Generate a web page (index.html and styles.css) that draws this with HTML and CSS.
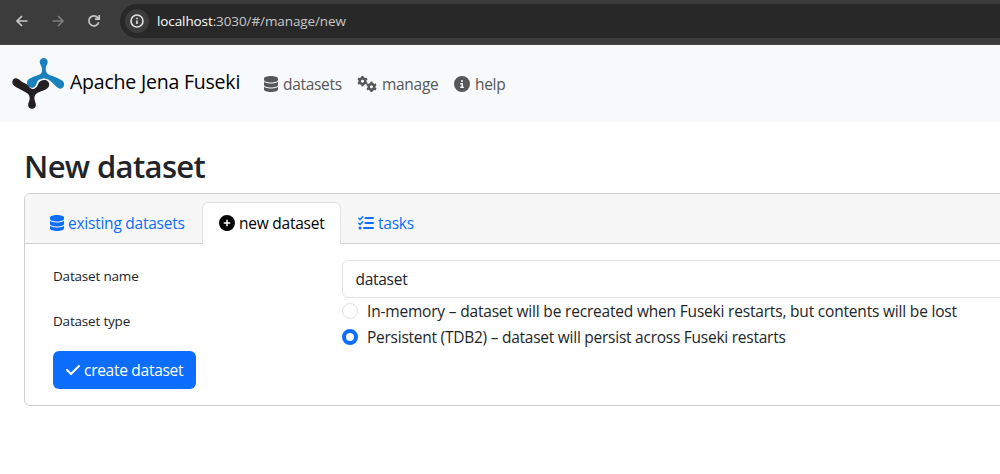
FILE: index.html
```html
<!DOCTYPE html>
<html lang="en">
<head>
<meta charset="utf-8">
<title>Apache Jena Fuseki</title>
<link rel="stylesheet" href="styles.css">
</head>
<body>
<svg class="defs" aria-hidden="true">
  <symbol id="database" viewBox="0 0 448 512"><path d="M448 80v48c0 44.2-100.3 80-224 80S0 172.2 0 128V80C0 35.8 100.3 0 224 0S448 35.8 448 80zM393.2 214.7c20.8-7.4 39.9-16.9 54.8-28.6V288c0 44.2-100.3 80-224 80S0 332.2 0 288V186.1c14.9 11.8 34 21.2 54.8 28.6C99.7 230.7 159.5 240 224 240s124.3-9.3 169.2-25.3zM0 346.1c14.9 11.8 34 21.2 54.8 28.6C99.7 390.7 159.5 400 224 400s124.3-9.3 169.2-25.3c20.8-7.4 39.9-16.9 54.8-28.6V432c0 44.2-100.3 80-224 80S0 476.2 0 432V346.1z"/></symbol>
  <symbol id="gear" viewBox="-6 -6 12 12"><circle r="3.1" fill="none" stroke="currentColor" stroke-width="2.8"/><g stroke="currentColor" stroke-width="2.5"><path d="M0-3.6V-5.7M0 3.6V5.7"/><path d="M0-3.6V-5.7M0 3.6V5.7" transform="rotate(60)"/><path d="M0-3.6V-5.7M0 3.6V5.7" transform="rotate(120)"/></g></symbol>
</svg>

<header class="browser">
  <svg class="tool" viewBox="0 0 16 16"><path d="M13.5 8H3M8 3L3 8l5 5"/></svg>
  <svg class="tool dim" viewBox="0 0 16 16"><path d="M2.5 8H13M8 3l5 5-5 5"/></svg>
  <svg class="tool" viewBox="0 0 16 16"><path d="M12.7 9.2A5 5 0 1 1 11.8 4.7L13 6M13.2 2v4.2H9"/></svg>
  <div class="address">
    <span class="site"><svg viewBox="0 0 14 14"><circle cx="7" cy="7" r="6"/><path d="M7 6.4V10M7 3.8v1.4"/></svg></span>
    <span class="url"><b>localhost</b>:3030/#/manage/new</span>
  </div>
</header>

<nav class="navbar">
  <svg class="logo" viewBox="0 0 54 52">
    <path class="blue" d="M31.700 1C34 1 35.700 2.700 35.700 5S34 8.500 33.800 11C33.600 14 34.200 16 36.300 17.300C38.500 18.800 40.500 19 43 20C45.500 21 47.500 22 49.700 23.300C52 24.600 52.800 27.500 51.600 29.600C50.500 31.600 48.500 32.300 46.500 31.300C43.500 29.600 41.500 26 38 23.700C36.300 22.300 34.800 21.700 32.500 21.500C30 21.500 27.800 22 26.300 23.300C24.500 25 25 26.500 24 28C22.800 30 21.300 30.900 19.500 30.800C17 30.700 15 28.500 15 26.300C15 24.500 15.500 23 17 22C19 20.600 20.800 20 23 19.200C26 18.200 28.500 17.500 29.400 16C30.200 14.500 30.200 12.500 29.800 10.500C29.400 8.500 27.700 7 27.700 5C27.700 2.700 29.400 1 31.700 1Z"/>
    <path class="black" d="M3.700 21.200C5.500 21.200 6.500 22 8 23.200C10 25 12 26 14.700 27.200C16.500 28.200 17 30 18.300 31.100C19.700 32.200 21.200 32.200 22.700 31.400C25 30.400 25.500 28.500 26.300 26.700C27.200 24.500 29.500 23 32.300 23C35 23 37.200 25 37.200 27.500C37.200 30 35.700 31.500 33.200 32.700C30.700 33.900 27.800 34.600 25.300 36C23.300 37.200 22.500 39 22.400 41C22.300 44.500 23.900 45.500 23.900 48C23.900 50.300 22.200 51.800 20 51.800S16.100 50.300 16.100 48C16.100 45.500 17.800 44.500 17.700 41C17.600 39 17 37.200 14.700 35.900C12.500 34.600 10.200 33.600 8 32.300C5.700 30.900 3.500 29.900 1.800 28.500C-.900 26 .300 21.200 3.700 21.200Z"/>
  </svg>
  <a class="brand">Apache Jena Fuseki</a>
  <a class="nav-link datasets"><svg class="db"><use href="#database"/></svg><span>datasets</span></a>
  <a class="nav-link manage"><svg class="gears" viewBox="0 0 20 16"><use href="#gear" x="0" y="-.3" width="11" height="11"/><use href="#gear" x="9" y="5.300" width="11" height="11"/></svg><span>manage</span></a>
  <a class="nav-link help"><svg class="round" viewBox="0 0 512 512"><path d="M256 512A256 256 0 1 0 256 0a256 256 0 1 0 0 512zM216 336h24V272H216c-13.3 0-24-10.7-24-24s10.7-24 24-24h48c13.3 0 24 10.7 24 24v88h8c13.3 0 24 10.7 24 24s-10.7 24-24 24H216c-13.3 0-24-10.7-24-24s10.7-24 24-24zm40-208a32 32 0 1 1 0 64 32 32 0 1 1 0-64z"/></svg><span>help</span></a>
</nav>

<main>
  <h1>New dataset</h1>
  <section class="card">
    <div class="tabs">
      <a class="tab existing"><svg class="db"><use href="#database"/></svg><span>existing datasets</span></a>
      <a class="tab active"><svg class="round" viewBox="0 0 512 512"><path d="M256 512A256 256 0 1 0 256 0a256 256 0 1 0 0 512zM232 344V280H168c-13.3 0-24-10.7-24-24s10.7-24 24-24h64V168c0-13.3 10.7-24 24-24s24 10.7 24 24v64h64c13.3 0 24 10.7 24 24s-10.7 24-24 24H280v64c0 13.3-10.7 24-24 24s-24-10.7-24-24z"/></svg><span>new dataset</span></a>
      <a class="tab tasks"><svg class="round list" viewBox="0 0 16 16"><path d="M.8 3.200l1.400 1.300L4.700 1.700M.8 8.200l1.400 1.300 2.500-2.800"/><path class="lines" d="M7.500 3H15M7.500 8H15M6 13h9"/><circle cx="2" cy="13" r="1.500"/></svg><span>tasks</span></a>
    </div>
    <form class="body">
      <div class="row">
        <label class="label name">Dataset name</label>
        <div class="input"><span>dataset</span></div>
      </div>
      <div class="row types">
        <label class="label type">Dataset type</label>
        <div class="options">
          <label class="option"><i class="radio"></i><span>In-memory – dataset will be recreated when Fuseki restarts, but contents will be lost</span></label>
          <label class="option"><i class="radio checked"></i><span class="persistent">Persistent (TDB2) – dataset will persist across Fuseki restarts</span></label>
        </div>
      </div>
      <a class="button"><svg viewBox="0 0 448 512"><path d="M438.600 105.400c12.500 12.500 12.500 32.800 0 45.300l-256 256c-12.500 12.500-32.800 12.500-45.300 0l-128-128c-12.500-12.500-12.500-32.800 0-45.300s32.800-12.500 45.300 0L160 338.700 393.400 105.400c12.500-12.500 32.800-12.500 45.300 0z"/></svg><span>create dataset</span></a>
    </form>
  </section>
</main>
</body>
</html>
```
FILE: styles.css
```css
* { box-sizing: border-box; }
body {
  margin: 0;
  height: 474px;
  overflow: hidden;
  background: #fff;
  color: #212529;
  font: 15.5px/24px "Open Sans", "Noto Sans", sans-serif;
  letter-spacing: -.19px;
}
svg { display: block; flex: none; fill: currentColor; }
span, .brand, h1, .label { white-space: nowrap; }
.defs { position: absolute; width: 0; height: 0; }

.browser {
  display: flex;
  align-items: center;
  height: 45px;
  padding: 0 0 3px 14px;
  gap: 20px;
  background: #3c3c3c;
  border-bottom: 1px solid #484848;
}
.tool { width: 16px; height: 16px; fill: none; stroke: #c7c7c7; stroke-width: 1.7; }
.tool.dim { stroke: #7d7d7d; }
.address {
  display: flex;
  align-items: center;
  flex: 1;
  height: 34px;
  margin-left: -2px;
  padding-left: 5px;
  border-radius: 17px 0 0 17px;
  background: #282828;
}
.site { display: grid; place-items: center; width: 24px; height: 24px; border-radius: 50%; background: #3c3c3c; }
.site svg { width: 14px; height: 14px; fill: none; stroke: #e3e3e3; stroke-width: 1.6; }
.url { margin-left: 8px; font-size: 13.5px; letter-spacing: -.1px; color: #c7c7c7; }
.url b { font-weight: 400; color: #fff; }

.navbar {
  display: flex;
  align-items: center;
  height: 77px;
  padding: 0 0 0 12px;
  background: #f8f9fb;
}
.logo { width: 54px; height: 52px; margin-top: -1px; }
.blue { fill: #1b81bd; }
.black { fill: #231f20; }
.brand { width: 194px; margin-left: 4px; margin-top: -3px; font-size: 19.5px; line-height: 30px; letter-spacing: -.21px; color: #000; }
.nav-link { display: flex; align-items: center; letter-spacing: -.3px; color: #565758; }
.nav-link svg { margin-right: 5px; }
.datasets { width: 93px; }
.manage { width: 97px; }
.db { width: 14px; height: 16px; }
.gears { width: 20px; height: 16px; }
.round { width: 16px; height: 16px; }

main { padding: 25px 0 0 24px; }
h1 { margin: 0 0 8px; font-size: 31px; line-height: 38px; font-weight: 600; letter-spacing: -.64px; }
.card { width: 1000px; height: 213px; border: 1px solid #cfcfd0; border-radius: 6px; }
.tabs {
  display: flex;
  height: 50px;
  padding: 8px 0 0 8px;
  background: #f7f7f7;
  border-bottom: 1px solid #cfcfd0;
  border-radius: 5px 0 0 0;
}
.tab { display: flex; align-items: center; height: 42px; padding: 0 17px; border-radius: 6px 6px 0 0; letter-spacing: -.24px; color: #0d6efd; }
.tab svg { margin-right: 4px; }
.existing { width: 169px; }
.active { width: 139px; padding: 0 16px 1px; border: 1px solid #dee2e6; border-bottom: 0; background: #fff; color: #000; }
.list { fill: currentColor; stroke: currentColor; stroke-width: 1.5; stroke-linecap: round; }
.list path { fill: none; }
.list circle { stroke: none; }
.list .lines { stroke-width: 2; }

.body { padding: 16px 0 0 28px; }
.row { display: flex; }
.label { width: 289px; font-size: 13.5px; line-height: 21px; }
.name { padding-top: 6px; }
.type { padding-top: 13px; }
.input { flex: 1; height: 38px; padding: 6px 12.5px; border: 1px solid #dee2e6; border-radius: 6px; letter-spacing: -.28px; }
.types { height: 53px; }
.options { display: grid; grid-auto-rows: 26px; }
.option { display: flex; align-items: center; gap: 9px; }
.persistent { letter-spacing: -.25px; }
.radio { width: 16px; height: 16px; border: 1px solid #dee2e6; border-radius: 50%; background: #fff; }
.checked { border: 4.500px solid #0d6efd; }
.button { display: flex; align-items: center; width: 143px; height: 38px; padding-left: 13px; border-radius: 6px; background: #0d6efd; color: #fff; letter-spacing: -.28px; }
.button svg { width: 14px; height: 16px; margin-right: 4px; }
```
